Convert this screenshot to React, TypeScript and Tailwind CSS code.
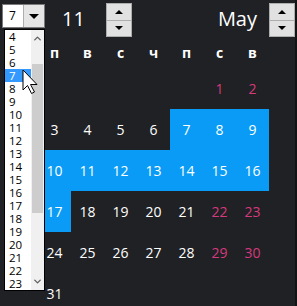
import { ChevronUp, ChevronDown } from "lucide-react";

const HEAD = ["п", "в", "с", "ч", "п", "с", "в"];

// null = empty cell
const WEEKS: (number | null)[][] = [
  [null, null, null, null, null, 1, 2],
  [3, 4, 5, 6, 7, 8, 9],
  [10, 11, 12, 13, 14, 15, 16],
  [17, 18, 19, 20, 21, 22, 23],
  [24, 25, 26, 27, 28, 29, 30],
  [31, null, null, null, null, null, null],
];

const PICKED = new Set([7, 8, 9, 10, 11, 12, 13, 14, 15, 16, 17]);

const OPTIONS = Array.from({ length: 20 }, (_, i) => i + 4);

function Spin() {
  return (
    <div className="flex flex-col w-[26px] h-[34px] mt-[3px] border border-[#adadad] bg-[#e1e1e1]">
      <div className="flex-1 flex items-center justify-center border-b border-[#adadad]">
        <div className="w-0 h-0 border-x-[4px] border-x-transparent border-b-[4px] border-b-black" />
      </div>
      <div className="flex-1 flex items-center justify-center">
        <div className="w-0 h-0 border-x-[4px] border-x-transparent border-t-[4px] border-t-black" />
      </div>
    </div>
  );
}

function Cursor() {
  return (
    <svg
      className="absolute left-[22px] top-[69px]"
      width="17"
      height="26"
      viewBox="0 0 17 26"
    >
      <path
        d="M1 1 V21 L5.5 16.5 L9.5 24.5 L12.5 23 L8.5 15.5 H15 Z"
        fill="#fff"
        stroke="#000"
        strokeWidth="1"
        strokeLinejoin="miter"
      />
    </svg>
  );
}

export default function App() {
  return (
    <div
      className="relative w-[297px] h-[306px] overflow-hidden bg-[#202124] border-r-2 border-[#131313]"
      style={{ fontFamily: "'Open Sans', 'Noto Sans', sans-serif" }}
    >
      {/* top bar */}
      <div className="flex items-start h-[37px]">
        <div className="ml-[2px] mt-[4px] w-[43px] h-[24px] flex border border-[#7a7a7a] bg-white">
          <div className="w-[20px] pl-[6px] text-[12px] leading-[22px] text-black">7</div>
          <div className="flex-1 flex items-center justify-center bg-[#e5e5e5] border-l border-[#adadad]">
            <div className="w-0 h-0 border-x-[5px] border-x-transparent border-t-[5px] border-t-black" />
          </div>
        </div>
        <div className="ml-[17px] mt-[9px] w-[44px] text-[20px] leading-[20px] text-white">11</div>
        <Spin />
        <div className="flex-1 mr-[12px] mt-[9px] text-right text-[20px] leading-[20px] text-white">May</div>
        <Spin />
      </div>

      {/* calendar */}
      <div className="ml-[38px] grid grid-cols-[repeat(7,33px)] grid-rows-[31px_repeat(6,41px)]">
        {HEAD.map((h, i) => (
          <div
            key={i}
            className="flex items-center justify-center text-[14px] font-bold text-white"
          >
            {h}
          </div>
        ))}
        {WEEKS.flat().map((d, i) => {
          const weekend = i % 7 >= 5;
          const picked = d !== null && PICKED.has(d);
          return (
            <div
              key={i}
              className={
                "flex items-center justify-center text-[14px] " +
                (picked ? "bg-[#0a9bf6] text-white" : weekend ? "text-[#d6397d]" : "text-white")
              }
            >
              {d ?? ""}
            </div>
          );
        })}
      </div>

      {/* open dropdown list */}
      <div className="absolute left-[4px] top-[29px] w-[41px] h-[262px] flex border border-black bg-white">
        <div className="w-[26px]">
          {OPTIONS.map((n) => (
            <div
              key={n}
              className={
                "h-[13px] pl-[4px] text-[11.5px] leading-[13px] " +
                (n === 7 ? "bg-[#3399ff] text-white" : "text-black")
              }
            >
              {n}
            </div>
          ))}
        </div>
        <div className="flex-1 flex flex-col bg-[#f0f0f0]">
          <div className="h-[17px] flex items-center justify-center">
            <ChevronUp size={11} strokeWidth={3} color="#606060" />
          </div>
          <div className="mt-[17px] h-[149px] mx-[1px] bg-[#cdcdcd]" />
          <div className="flex-1" />
          <div className="h-[17px] flex items-center justify-center">
            <ChevronDown size={11} strokeWidth={3} color="#606060" />
          </div>
        </div>
      </div>

      <Cursor />
    </div>
  );
}
